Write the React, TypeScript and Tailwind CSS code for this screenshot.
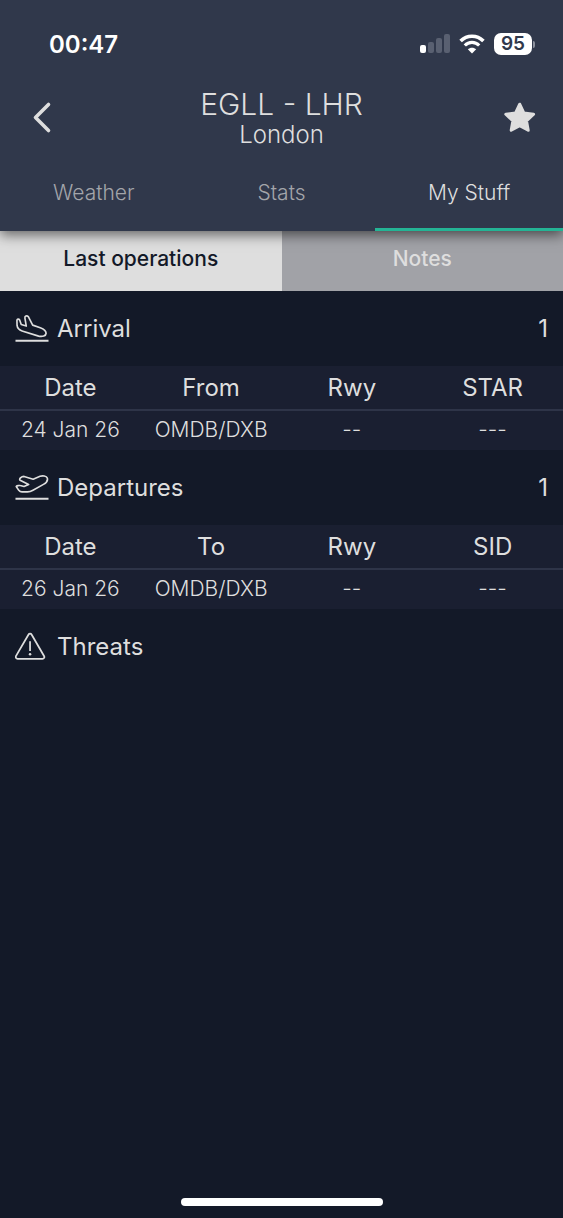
import React, { useState } from 'react';

type Operation = { date: string; place: string; rwy: string; procedure: string };

const arrivals: Operation[] = [{ date: '24 Jan 26', place: 'OMDB/DXB', rwy: '--', procedure: '---' }];
const departures: Operation[] = [{ date: '26 Jan 26', place: 'OMDB/DXB', rwy: '--', procedure: '---' }];

function SignalIcon() {
  return (
    <svg viewBox="0 0 30 20" className="h-5 w-[30px]" aria-hidden="true">
      <rect x="0" y="11" width="6" height="8" rx="2" fill="#fff" />
      <rect x="8" y="8" width="6" height="11" rx="2" fill="#596071" />
      <rect x="16" y="4" width="6" height="15" rx="2" fill="#596071" />
      <rect x="24" y="0" width="6" height="19" rx="2" fill="#596071" />
    </svg>
  );
}

function WifiIcon() {
  return (
    <svg viewBox="0 0 26 20" className="h-5 w-[26px]" fill="none" stroke="#fff" aria-hidden="true">
      <path d="M1.6 7.1C8 .7 18 .7 24.4 7.1" strokeWidth="3.6" />
      <path d="M5.8 11.5c4-4.1 10.4-4.1 14.4 0" strokeWidth="3.2" />
      <path d="M13 19.4 8.8 15.2c2.3-2.1 6.1-2.1 8.4 0z" fill="#fff" stroke="none" />
    </svg>
  );
}

function LandingIcon() {
  return (
    <svg viewBox="0 0 35 30" className="h-[30px] w-[34px]" fill="none" stroke="#dedede" strokeWidth="1.7" strokeLinejoin="round" aria-hidden="true">
      <path d="M2 6.200C2 4.700 3.800 4.200 4.800 5.700L6.400 10.400 11.600 12 10.200 3.800C9.900 1.500 12 .8 13.700 2.200L18.200 11 26 13.700C29.500 15 32 17 32 19.500 31.900 22.100 28.300 23.100 24.300 22.300L7.300 17C4.300 16 2.400 13.800 2.100 11.300Z" />
      <path d="M.5 27h34" strokeWidth="2" />
    </svg>
  );
}

function TakeoffIcon() {
  return (
    <svg viewBox="0 0 35 30" className="h-[30px] w-[34px]" fill="none" stroke="#dedede" strokeWidth="1.7" strokeLinejoin="round" aria-hidden="true">
      <path d="M1.300 13.400C1.500 12.600 4.500 12.200 5.400 12.500L9.300 13.500 14 11.300 5.300 7C3.700 5.800 6.500 3.200 9.300 3.100L18.700 6 25.800 3C28.200 2.100 32.500 2.500 33.200 4.700 34 7.100 32.300 9.600 29.300 11.300L18.500 17.300C16.500 18.500 15 19 12.800 19H7.200C5.700 19 4.700 18.400 3.900 17.400Z" />
      <path d="M.5 26h34" strokeWidth="2" />
    </svg>
  );
}

function ThreatIcon() {
  return (
    <svg viewBox="0 0 35 30" className="h-[30px] w-[34px]" fill="none" stroke="#dedede" strokeWidth="1.8" strokeLinejoin="round" aria-hidden="true">
      <path d="M13.8 2.400c.8-1.400 2.600-1.400 3.400 0l12.700 21.800c.8 1.400 0 2.900-1.600 2.900H2.700c-1.600 0-2.400-1.500-1.600-2.900z" />
      <path d="M15.500 9v10.200" />
      <circle cx="15.500" cy="22.400" r="1.300" fill="#dedede" stroke="none" />
    </svg>
  );
}

function SectionTitle({ icon, title, count }: { icon: React.ReactNode; title: string; count?: number }) {
  return (
    <div className="flex h-[75px] items-center gap-2 px-[15px] text-2xl">
      {icon}
      <h2>{title}</h2>
      {count !== undefined && <span className="ml-auto">{count}</span>}
    </div>
  );
}

function OperationsTable({ label, columns, rows }: { label: string; columns: string[]; rows: Operation[] }) {
  return (
    <table aria-label={label} className="w-full table-fixed border-collapse bg-[#1a1f31] text-center">
      <thead>
        <tr className="h-11 border-b-2 border-[#2e3448] text-2xl">
          {columns.map((column) => (
            <th key={column} scope="col" className="p-0 font-normal">{column}</th>
          ))}
        </tr>
      </thead>
      <tbody>
        {rows.map((row) => (
          <tr key={row.date} className="h-10 text-[21px] font-light">
            <td className="p-0 pb-0.5">{row.date}</td>
            <td className="p-0 pb-0.5">{row.place}</td>
            <td className="p-0 pb-0.5">{row.rwy}</td>
            <td className="p-0 pb-0.5">{row.procedure}</td>
          </tr>
        ))}
      </tbody>
    </table>
  );
}

const tabs = ['Weather', 'Stats', 'My Stuff'];
const views = ['Last operations', 'Notes'];

export default function App() {
  const [tab, setTab] = useState('My Stuff');
  const [view, setView] = useState('Last operations');

  return (
    <div className="flex min-h-screen flex-col bg-[#131928] font-['Inter',sans-serif] text-[#dedede]">
      <header className="relative z-10 bg-[#30384b] shadow-[0_4px_12px_rgba(0,0,0,0.55)]">
        <div className="flex h-[88px] items-center justify-between pr-7 pl-[49px] text-white">
          <time className="pt-0.5 text-2xl font-semibold">00:47</time>
          <div className="flex items-center gap-[9px]">
            <SignalIcon />
            <WifiIcon />
            <div className="flex items-center gap-px">
              <span className="flex h-[22px] w-[38px] items-center justify-center rounded-[7px] bg-white text-[19px] font-semibold text-[#30384b]">95</span>
              <span className="h-[7px] w-[2px] rounded-r-full bg-[#8c919d]" />
            </div>
          </div>
        </div>
        <div className="flex h-[62px] items-center justify-between px-6">
          <button type="button" aria-label="Back" className="flex h-10 w-9 items-center justify-center">
            <svg viewBox="0 0 36 40" className="h-10 w-9" fill="none" stroke="#dedede" strokeWidth="3.600" strokeLinecap="round" strokeLinejoin="round" aria-hidden="true">
              <path d="M24.500 5.500 11.500 18.500l13 13" />
            </svg>
          </button>
          <div className="text-center font-light">
            <h1 className="text-3xl leading-8">EGLL - LHR</h1>
            <p className="text-2xl leading-[30px]">London</p>
          </div>
          <button type="button" aria-label="Favourite" className="flex h-10 w-9 items-center justify-center">
            <svg viewBox="0 0 36 40" className="h-10 w-9" fill="#dedede" stroke="#dedede" strokeWidth="3" strokeLinejoin="round" aria-hidden="true">
              <path d="m16.700 5.200 4.100 8.700 9.800 1.300-7.100 6.600 1.700 9.500-8.500-4.600-8.500 4.600 1.700-9.500-7.100-6.600 9.800-1.300z" />
            </svg>
          </button>
        </div>
        <nav className="grid h-[81px] grid-cols-3">
          {tabs.map((name) => (
            <button
              key={name}
              type="button"
              aria-current={tab === name ? 'page' : undefined}
              onClick={() => setTab(name)}
              className={
                tab === name
                  ? 'border-b-[3px] border-[#24b495] pt-2 text-[21px] font-light'
                  : 'border-b-[3px] border-transparent pt-2 text-[21px] font-light text-[#a3a5aa]'
              }
            >
              {name}
            </button>
          ))}
        </nav>
      </header>

      <div className="grid h-[60px] grid-cols-2">
        {views.map((name) => (
          <button
            key={name}
            type="button"
            aria-pressed={view === name}
            onClick={() => setView(name)}
            className={
              view === name
                ? 'bg-[#dedede] pb-1 text-[21px] font-medium text-[#131928]'
                : 'bg-[#a1a2a7] pb-1 text-[21px] font-medium text-[#dedede]'
            }
          >
            {name}
          </button>
        ))}
      </div>

      <main className="grow">
        <SectionTitle icon={<LandingIcon />} title="Arrival" count={1} />
        <OperationsTable label="Arrivals" columns={['Date', 'From', 'Rwy', 'STAR']} rows={arrivals} />
        <SectionTitle icon={<TakeoffIcon />} title="Departures" count={1} />
        <OperationsTable label="Departures" columns={['Date', 'To', 'Rwy', 'SID']} rows={departures} />
        <SectionTitle icon={<ThreatIcon />} title="Threats" />
      </main>

      <footer className="flex justify-center pb-3">
        <div className="h-2 w-[202px] rounded-full bg-white" />
      </footer>
    </div>
  );
}
